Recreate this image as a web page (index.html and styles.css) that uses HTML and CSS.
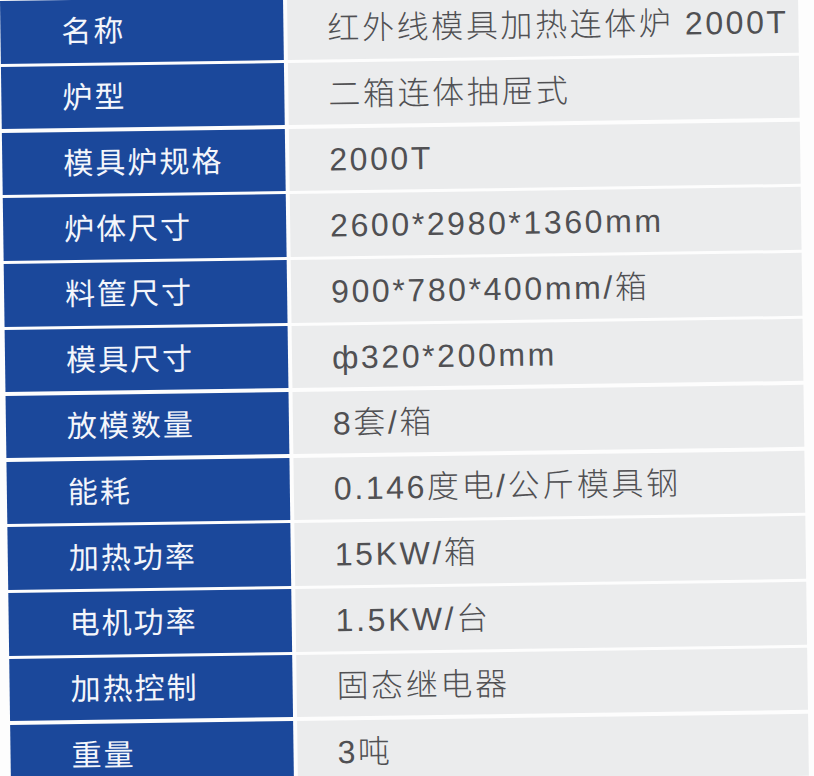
FILE: index.html
```html
<!DOCTYPE html>
<html lang="zh-CN">
<head>
<meta charset="utf-8">
<title>红外线模具加热连体炉 2000T</title>
<link rel="stylesheet" href="styles.css">
</head>
<body>
<div class="sheet">
  <div class="spec">
    <div class="label">名称</div><div class="value">红外线模具加热连体炉 2000T</div>
    <div class="label">炉型</div><div class="value">二箱连体抽屉式</div>
    <div class="label">模具炉规格</div><div class="value">2000T</div>
    <div class="label">炉体尺寸</div><div class="value">2600*2980*1360mm</div>
    <div class="label">料筐尺寸</div><div class="value">900*780*400mm/箱</div>
    <div class="label">模具尺寸</div><div class="value">ф320*200mm</div>
    <div class="label">放模数量</div><div class="value">8套/箱</div>
    <div class="label">能耗</div><div class="value">0.146度电/公斤模具钢</div>
    <div class="label">加热功率</div><div class="value">15KW/箱</div>
    <div class="label">电机功率</div><div class="value">1.5KW/台</div>
    <div class="label">加热控制</div><div class="value">固态继电器</div>
    <div class="label">重量</div><div class="value">3吨</div>
  </div>
</div>
</body>
</html>
```

FILE: styles.css
```css
html, body {
  margin: 0;
  padding: 0;
  overflow: hidden;
  background: #fdfdfd;
}

.sheet {
  width: 814px;
  height: 776px;
  overflow: hidden;
}

.spec {
  display: grid;
  grid-template-columns: 283px 511px;
  grid-auto-rows: 62.5px;
  gap: 3.3px 4px;
  padding-top: 1px;
  transform: rotate(-0.8deg);
  transform-origin: 0 0;
}

.label {
  display: flex;
  align-items: center;
  padding: 0 0 4px 61px;
  background: #1b489b;
  color: #f4f6fb;
  font-family: "Noto Sans CJK SC", sans-serif;
  font-size: 30px;
  letter-spacing: 2px;
  line-height: 1;
}

.value {
  display: flex;
  align-items: center;
  padding: 1px 0 0 40px;
  background: #ebeced;
  color: #505053;
  font-family: "Liberation Sans", "Noto Sans CJK SC", sans-serif;
  font-size: 32px;
  font-weight: 300;
  letter-spacing: 2.6px;
  line-height: 1;
  white-space: nowrap;
}
```
